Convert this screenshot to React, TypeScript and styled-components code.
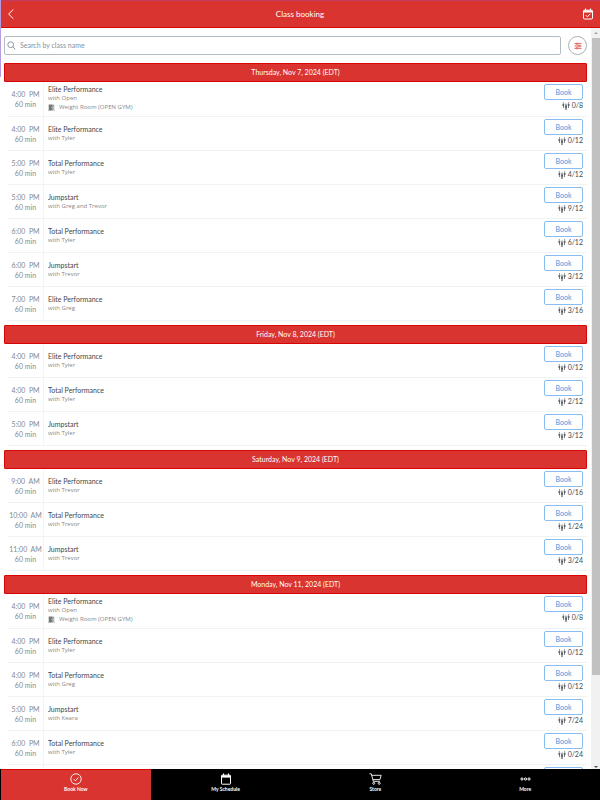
import React from "react";
import styled, { createGlobalStyle } from "styled-components";

const GlobalStyle = createGlobalStyle`
  *, *::before, *::after { box-sizing: border-box; }
  body { margin: 0; background: #fff; font-family: Lato, "Open Sans", sans-serif; }
  button, input { font: inherit; margin: 0; }
  h1, h2, h3, p, ul { margin: 0; padding: 0; font-weight: 400; }
  ul { list-style: none; }
`;

const red = "#d9342f";
const deepRed = "#d90404";
const smallFont = `"Open Sans", Lato, sans-serif`;

const Page = styled.div`
  height: 100vh;
  display: flex;
  flex-direction: column;
  position: relative;
  overflow: hidden;
`;

const EdgeAccent = styled.div`
  position: absolute;
  left: 0;
  top: 0;
  width: 1px;
  height: 77px;
  background: #b79be0;
`;

const Header = styled.header`
  flex: none;
  height: 28px;
  padding: 0 6px;
  display: grid;
  grid-template-columns: 1fr auto 1fr;
  align-items: center;
  background: ${red};
  border-top: 1px solid #c13c62;
  border-bottom: 1px solid ${deepRed};
  color: #fff;
`;

const Title = styled.h1`
  font-size: 8px;
  line-height: 12px;
`;

const HeaderButton = styled.button<{ $end?: boolean }>`
  display: flex;
  justify-self: ${(p) => (p.$end ? "end" : "start")};
  padding: 0;
  border: 0;
  background: none;
  color: #fff;
`;

const Body = styled.div`
  flex: 1;
  min-height: 0;
  display: flex;
`;

const Main = styled.main`
  flex: 1;
  min-width: 0;
  overflow: hidden;
  padding: 8px 4px 0;
`;

const SearchBar = styled.div`
  display: flex;
  align-items: center;
  gap: 7px;
  margin-bottom: 8px;
`;

const SearchField = styled.label`
  flex: 1;
  height: 19px;
  display: flex;
  align-items: center;
  gap: 4px;
  padding: 0 2px 1px;
  border: 1px solid #b4bdc3;
  border-radius: 2px;
  color: #71808a;
`;

const SearchInput = styled.input`
  flex: 1;
  min-width: 0;
  padding: 0;
  border: 0;
  outline: 0;
  background: none;
  font-size: 7px;
  line-height: 10px;
  color: #4c5960;
  &::placeholder { color: #84929c; opacity: 1; }
`;

const FilterButton = styled.button`
  width: 19px;
  height: 19px;
  display: flex;
  align-items: center;
  justify-content: center;
  padding: 0;
  border: 1px solid #a9b2b8;
  border-radius: 50%;
  background: #fff;
  color: ${red};
`;

const Day = styled.section`
  padding-bottom: 4px;
  &:last-child { padding-bottom: 0; }
`;

const DayTitle = styled.h2`
  height: 19px;
  border: 1px solid ${deepRed};
  border-radius: 1px;
  background: ${red};
  color: #fff;
  font-size: 7px;
  line-height: 17px;
  text-align: center;
`;

const Row = styled.li<{ $tall?: boolean }>`
  height: ${(p) => (p.$tall ? 35 : 34)}px;
  margin-left: 4px;
  display: grid;
  grid-template-columns: 36px 1fr auto;
  border-bottom: 1px solid #f0f3f3;
`;

const Time = styled.div`
  display: flex;
  flex-direction: column;
  justify-content: center;
  border-right: 1px solid #f2f4f5;
  text-align: center;
  white-space: pre;
  font-size: 7px;
  line-height: 10px;
  color: #85898c;
`;

const Details = styled.div<{ $tall?: boolean }>`
  display: flex;
  flex-direction: column;
  justify-content: center;
  padding-left: 4px;
  padding-bottom: ${(p) => (p.$tall ? 2 : 0)}px;
`;

const ClassName = styled.h3`
  font-size: 7px;
  line-height: 10px;
  color: #44484b;
`;

const Note = styled.p`
  display: flex;
  align-items: center;
  gap: 4px;
  font-family: ${smallFont};
  font-size: 6px;
  line-height: 9px;
  color: #85898b;
`;

const Booking = styled.div`
  display: flex;
  flex-direction: column;
  align-items: flex-end;
  padding: 2px 4px 0 0;
`;

const BookButton = styled.button`
  width: 39px;
  height: 16px;
  padding: 0;
  border: 1px solid #87bdf0;
  border-radius: 2px;
  background: #fff;
  color: #3e97dd;
  font-size: 7px;
  line-height: 14px;
`;

const Spots = styled.span`
  display: flex;
  align-items: center;
  gap: 2px;
  font-size: 7px;
  line-height: 11px;
  color: #44484b;
`;

const ScrollRail = styled.div`
  flex: none;
  width: 9px;
  display: flex;
  flex-direction: column;
  align-items: center;
  padding: 4px 0 1px;
  background: #f1f1f1;
`;

const ScrollThumb = styled.div`
  width: 8px;
  flex: 637;
  margin-top: 4px;
  background: #c1c1c1;
`;

const ScrollSpace = styled.div`
  flex: 91;
`;

const Arrow = styled.div<{ $down?: boolean }>`
  border-left: 2px solid transparent;
  border-right: 2px solid transparent;
  border-top: ${(p) => (p.$down ? "2px solid #505050" : "0")};
  border-bottom: ${(p) => (p.$down ? "0" : "2px solid #a3a3a3")};
`;

const Nav = styled.nav`
  flex: none;
  height: 31px;
  display: grid;
  grid-template-columns: repeat(4, 1fr);
  padding-left: 1px;
  background: #000;
`;

const NavLink = styled.a<{ $active?: boolean }>`
  display: flex;
  flex-direction: column;
  align-items: center;
  padding-top: 2px;
  border-top: 1px solid ${(p) => (p.$active ? deepRed : "#000")};
  background: ${(p) => (p.$active ? red : "#000")};
  color: #fff;
  font-size: 5px;
  font-weight: 700;
  line-height: 8px;
  text-decoration: none;
`;

const NavIcon = styled.span`
  height: 13px;
  display: flex;
  align-items: center;
`;

const stroke = { fill: "none", stroke: "currentColor", "aria-hidden": true } as const;

const BackIcon = () => (
  <svg width="10" height="12" viewBox="0 0 10 12" {...stroke}>
    <path d="M7.3 1.5 2.6 6l4.7 4.7" />
  </svg>
);

const CalendarCheckIcon = () => (
  <svg width="12" height="12" viewBox="0 0 12 12" {...stroke}>
    <rect x="1.5" y="2.2" width="9" height="8.8" rx="1" />
    <path d="M1.5 3.5h9" strokeWidth="2" />
    <path d="M3.5.5v2M8.5.5v2" />
    <path d="m3.8 7.2 1.6 1.6 3-3" />
  </svg>
);

const SearchIcon = () => (
  <svg width="9" height="9" viewBox="0 0 9 9" strokeWidth=".8" {...stroke}>
    <circle cx="3.7" cy="3.7" r="2.9" />
    <path d="m5.8 5.8 2.6 2.6" />
  </svg>
);

const SlidersIcon = () => (
  <svg width="8" height="8" viewBox="0 0 8 8" strokeWidth=".8" {...stroke}>
    <path d="M.5 1.7h7M.5 4h7M.5 6.3h7" />
    <g fill="#fff" strokeWidth=".7">
      <circle cx="3" cy="1.7" r=".8" />
      <circle cx="5.3" cy="4" r=".8" />
      <circle cx="3" cy="6.3" r=".8" />
    </g>
  </svg>
);

const RoomIcon = () => (
  <svg width="7" height="7" viewBox="0 0 7 7" fill="#74787a" aria-hidden="true">
    <path d="M.7.5h4v6h-4zM0 6h1v.6H0zM5.1.8h1.1v5.1H7v.7H5.5V1.5h-.4z" />
    <circle cx="3.9" cy="3.5" r=".4" fill="#fff" />
  </svg>
);

const PeopleIcon = () => (
  <svg width="8" height="8" viewBox="0 0 8 8" fill="#5c6063" aria-hidden="true">
    <circle cx="1.4" cy=".8" r=".6" />
    <circle cx="6.6" cy=".8" r=".6" />
    <circle cx="4" cy="2.2" r=".7" />
    <path d="M.6 1.7h1.6v2.1l-.4.3V6H1V4.1l-.6-.4zM5.8 1.7h1.6l.2 2-.6.4V6h-.8V4.1l-.4-.3zM3.1 3.2h1.8l.2 2.2-.5.3V8H3.4V5.7l-.5-.3z" />
  </svg>
);

const CheckCircleIcon = () => (
  <svg width="12" height="12" viewBox="0 0 12 12" strokeWidth=".9" {...stroke}>
    <circle cx="6" cy="6" r="5.2" />
    <path d="m3.8 6.2 1.6 1.6 3-3.3" />
  </svg>
);

const CalendarIcon = () => (
  <svg width="12" height="12" viewBox="0 0 12 12" {...stroke}>
    <rect x="1.5" y="2.2" width="9" height="9" rx=".6" />
    <path d="M1.5 3.5h9" strokeWidth="2.2" />
    <path d="M3.5.6v2M8.5.6v2" strokeWidth="1.2" />
  </svg>
);

const CartIcon = () => (
  <svg width="13" height="12" viewBox="0 0 13 12" strokeWidth=".9" {...stroke}>
    <path d="M.5.8h1.8l2 7.5h6.6M2.7 2.3h9.5l-1.3 4.3H4" />
    <circle cx="4.7" cy="10.3" r="1" />
    <circle cx="10.2" cy="10.3" r="1" />
  </svg>
);

const DotsIcon = () => (
  <svg width="11" height="4" viewBox="0 0 11 4" {...stroke}>
    <circle cx="2" cy="2" r="1.1" />
    <circle cx="5.5" cy="2" r="1.1" />
    <circle cx="9" cy="2" r="1.1" />
  </svg>
);

type Session = [time: string, name: string, host: string, spots: string, room?: string];

const gym = "Weight Room (OPEN GYM)";
const days: { date: string; sessions: Session[]; more?: boolean }[] = [
  {
    date: "Thursday, Nov 7, 2024 (EDT)",
    sessions: [
      ["4:00  PM", "Elite Performance", "Open", "0/8", gym],
      ["4:00  PM", "Elite Performance", "Tyler", "0/12"],
      ["5:00  PM", "Total Performance", "Tyler", "4/12"],
      ["5:00  PM", "Jumpstart", "Greg and Trevor", "9/12"],
      ["6:00  PM", "Total Performance", "Tyler", "6/12"],
      ["6:00  PM", "Jumpstart", "Trevor", "3/12"],
      ["7:00  PM", "Elite Performance", "Greg", "3/16"],
    ],
  },
  {
    date: "Friday, Nov 8, 2024 (EDT)",
    sessions: [
      ["4:00  PM", "Elite Performance", "Tyler", "0/12"],
      ["4:00  PM", "Total Performance", "Tyler", "2/12"],
      ["5:00  PM", "Jumpstart", "Tyler", "3/12"],
    ],
  },
  {
    date: "Saturday, Nov 9, 2024 (EDT)",
    sessions: [
      ["9:00  AM", "Elite Performance", "Trevor", "0/16"],
      ["10:00  AM", "Total Performance", "Trevor", "1/24"],
      ["11:00  AM", "Jumpstart", "Trevor", "3/24"],
    ],
  },
  {
    date: "Monday, Nov 11, 2024 (EDT)",
    sessions: [
      ["4:00  PM", "Elite Performance", "Open", "0/8", gym],
      ["4:00  PM", "Elite Performance", "Tyler", "0/12"],
      ["4:00  PM", "Total Performance", "Greg", "0/12"],
      ["5:00  PM", "Jumpstart", "Keara", "7/24"],
      ["6:00  PM", "Total Performance", "Tyler", "0/24"],
    ],
    more: true,
  },
];

const SessionRow = ({ session }: { session: Session }) => {
  const [time, name, host, spots, room] = session;
  const tall = Boolean(room);
  return (
    <Row $tall={tall}>
      <Time>
        <span>{time}</span>
        <span>60 min</span>
      </Time>
      <Details $tall={tall}>
        <ClassName>{name}</ClassName>
        <Note>with {host}</Note>
        {room && (
          <Note>
            <RoomIcon />
            {room}
          </Note>
        )}
      </Details>
      <Booking>
        <BookButton type="button">Book</BookButton>
        <Spots>
          <PeopleIcon />
          {spots}
        </Spots>
      </Booking>
    </Row>
  );
};

const PendingRow = () => (
  <Row>
    <Time />
    <Details />
    <Booking>
      <BookButton type="button" aria-label="Book" />
    </Booking>
  </Row>
);

export default function App() {
  return (
    <Page>
      <GlobalStyle />
      <Header>
        <HeaderButton type="button" aria-label="Back">
          <BackIcon />
        </HeaderButton>
        <Title>Class booking</Title>
        <HeaderButton type="button" aria-label="Calendar" $end>
          <CalendarCheckIcon />
        </HeaderButton>
      </Header>
      <Body>
        <Main>
          <SearchBar>
            <SearchField>
              <SearchIcon />
              <SearchInput aria-label="Search by class name" placeholder="Search by class name" />
            </SearchField>
            <FilterButton type="button" aria-label="Filters">
              <SlidersIcon />
            </FilterButton>
          </SearchBar>
          {days.map((day) => (
            <Day key={day.date}>
              <DayTitle>{day.date}</DayTitle>
              <ul>
                {day.sessions.map((session, i) => (
                  <SessionRow key={i} session={session} />
                ))}
                {day.more && <PendingRow />}
              </ul>
            </Day>
          ))}
        </Main>
        <ScrollRail aria-hidden="true">
          <Arrow />
          <ScrollThumb />
          <ScrollSpace />
          <Arrow $down />
        </ScrollRail>
      </Body>
      <Nav>
        <NavLink href="#book" $active>
          <NavIcon><CheckCircleIcon /></NavIcon>
          Book Now
        </NavLink>
        <NavLink href="#schedule">
          <NavIcon><CalendarIcon /></NavIcon>
          My Schedule
        </NavLink>
        <NavLink href="#store">
          <NavIcon><CartIcon /></NavIcon>
          Store
        </NavLink>
        <NavLink href="#more">
          <NavIcon><DotsIcon /></NavIcon>
          More
        </NavLink>
      </Nav>
      <EdgeAccent />
    </Page>
  );
}
